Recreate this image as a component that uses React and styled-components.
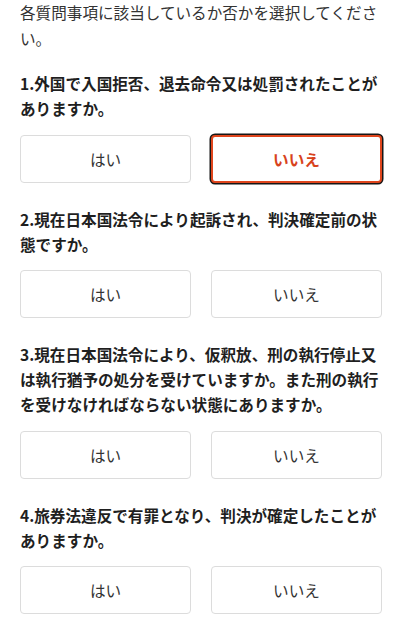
import React, { useState } from 'react';
import styled, { createGlobalStyle, css } from 'styled-components';

const GlobalStyle = createGlobalStyle`
  html, body {
    margin: 0;
    padding: 0;
    background: #fff;
  }
  body {
    font-family: "Noto Sans CJK JP", "Noto Sans", sans-serif;
    -webkit-font-smoothing: antialiased;
  }
`;

const Page = styled.main`
  padding: 0 20px 24px;
`;

const Intro = styled.p`
  margin: -1px 0 20px;
  font-size: 15.6px;
  line-height: 26px;
  color: #333;
`;

const Question = styled.section`
  padding-bottom: 24px;
`;

const Title = styled.h2`
  margin: 0 0 13.5px;
  font-size: 15.6px;
  line-height: 25px;
  font-weight: 700;
  color: #1f1f1f;
`;

const Choices = styled.div`
  display: grid;
  grid-template-columns: 1fr 1fr;
  gap: 20px;
`;

const Choice = styled.button`
  height: 48px;
  box-sizing: border-box;
  background: #fff;
  border: 1px solid #dcdcdc;
  border-radius: 4px;
  font-family: inherit;
  font-size: 15.6px;
  color: #333;
  cursor: pointer;
  padding: 0;

  ${(props) =>
    props.selected &&
    css`
      border: 2px solid #e0461d;
      box-shadow: 0 0 0 1.5px #161616;
      color: #d8431c;
      font-weight: 700;
    `}
`;

const questions = [
  '1.外国で入国拒否、退去命令又は処罰されたことがありますか。',
  '2.現在日本国法令により起訴され、判決確定前の状態ですか。',
  '3.現在日本国法令により、仮釈放、刑の執行停止又は執行猶予の処分を受けていますか。また刑の執行を受けなければならない状態にありますか。',
  '4.旅券法違反で有罪となり、判決が確定したことがありますか。',
];

const App = () => {
  const [answers, setAnswers] = useState({ 0: 'no' });

  return (
    <>
      <GlobalStyle />
      <Page>
        <Intro>各質問事項に該当しているか否かを選択してください。</Intro>
        {questions.map((q, i) => (
          <Question key={i}>
            <Title>{q}</Title>
            <Choices>
              <Choice
                type="button"
                selected={answers[i] === 'yes'}
                onClick={() => setAnswers((a) => ({ ...a, [i]: 'yes' }))}
              >
                はい
              </Choice>
              <Choice
                type="button"
                selected={answers[i] === 'no'}
                onClick={() => setAnswers((a) => ({ ...a, [i]: 'no' }))}
              >
                いいえ
              </Choice>
            </Choices>
          </Question>
        ))}
      </Page>
    </>
  );
};

export default App;
